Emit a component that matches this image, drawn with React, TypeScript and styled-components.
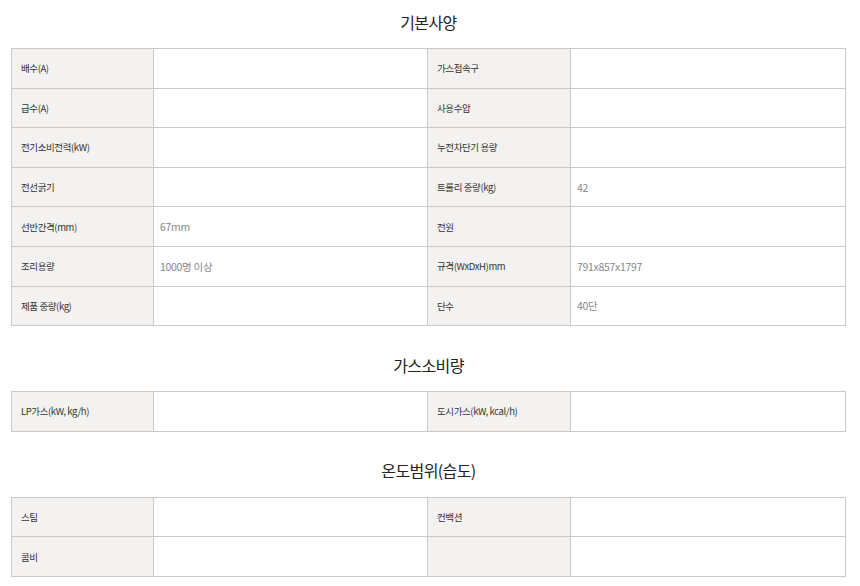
import styled, { createGlobalStyle } from "styled-components";

const GlobalStyle = createGlobalStyle`
  body {
    margin: 0;
    background: #fff;
    font-family: "Noto Sans CJK KR", "Noto Sans", sans-serif;
  }
`;

const Page = styled.div`
  width: 835px;
  margin-left: 11px;
  display: flex;
  flex-direction: column;
`;

const Section = styled.section<{ $first?: boolean }>`
  margin-top: ${(p) => (p.$first ? "0" : "17px")};
  display: flex;
  flex-direction: column;
`;

const Title = styled.h2`
  margin: 0;
  height: 48px;
  padding-bottom: 5px;
  box-sizing: border-box;
  display: flex;
  align-items: center;
  justify-content: center;
  font-size: 16px;
  font-weight: 400;
  letter-spacing: -0.6px;
  color: #222;
`;

const Table = styled.div`
  border: 1px solid #cbc8c8;
  border-bottom: none;
  display: flex;
  flex-direction: column;
`;

const Row = styled.div`
  display: grid;
  grid-template-columns: 142px 274px 143px 1fr;
  height: 39.6px;
  border-bottom: 1px solid #cbc8c8;
  box-sizing: border-box;
`;

const Label = styled.div`
  background: #f3f2f0;
  border-right: 1px solid #cbc8c8;
  display: flex;
  align-items: center;
  padding-left: 9px;
  font-size: 9.5px;
  letter-spacing: -0.4px;
  color: #333;
`;

const Value = styled.div<{ $last?: boolean }>`
  display: flex;
  align-items: center;
  padding-left: 6px;
  font-size: 10.5px;
  letter-spacing: -0.3px;
  color: #888;
  border-right: ${(p) => (p.$last ? "none" : "1px solid #cbc8c8")};
`;

type Pair = [string, string];

const basic: [Pair, Pair][] = [
  [["배수(A)", ""], ["가스접속구", ""]],
  [["급수(A)", ""], ["사용수압", ""]],
  [["전기소비전력(kW)", ""], ["누전차단기 용량", ""]],
  [["전선굵기", ""], ["트롤리 중량(kg)", "42"]],
  [["선반간격(mm)", "67mm"], ["전원", ""]],
  [["조리용량", "1000명 이상"], ["규격(WxDxH)mm", "791x857x1797"]],
  [["제품 중량(kg)", ""], ["단수", "40단"]],
];

const gas: [Pair, Pair][] = [
  [["LP가스(kW, kg/h)", ""], ["도시가스(kW, kcal/h)", ""]],
];

const temp: [Pair, Pair][] = [
  [["스팀", ""], ["컨백션", ""]],
  [["콤비", ""], ["", ""]],
];

function SpecTable({ rows }: { rows: [Pair, Pair][] }) {
  return (
    <Table>
      {rows.map(([a, b], i) => (
        <Row key={i}>
          <Label>{a[0]}</Label>
          <Value>{a[1]}</Value>
          <Label>{b[0]}</Label>
          <Value $last>{b[1]}</Value>
        </Row>
      ))}
    </Table>
  );
}

export default function App() {
  return (
    <>
      <GlobalStyle />
      <Page>
        <Section $first>
          <Title>기본사양</Title>
          <SpecTable rows={basic} />
        </Section>
        <Section>
          <Title>가스소비량</Title>
          <SpecTable rows={gas} />
        </Section>
        <Section>
          <Title>온도범위(습도)</Title>
          <SpecTable rows={temp} />
        </Section>
      </Page>
    </>
  );
}
